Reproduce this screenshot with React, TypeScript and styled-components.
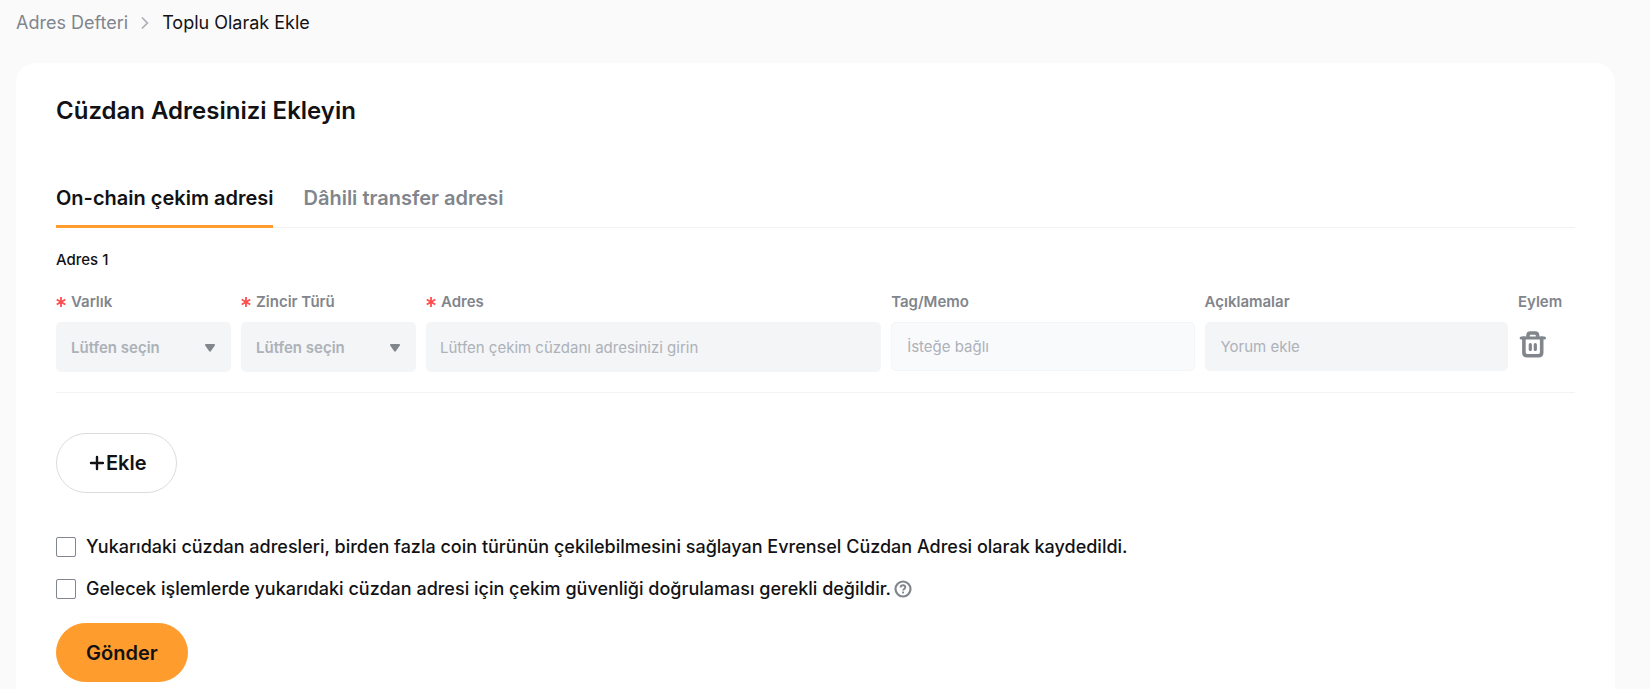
import React, { useState } from "react";
import styled, { createGlobalStyle } from "styled-components";

const color = {
  page: "#fafafa",
  ink: "#121214",
  muted: "#81858c",
  hint: "#adb1b8",
  field: "#f3f5f7",
  line: "#f3f3f4",
  accent: "#ff9c2e",
  danger: "#ff4d4f",
};

const GlobalStyle = createGlobalStyle`
  *, *::before, *::after { box-sizing: border-box; }
  html, body, #root { height: 100%; }
  body {
    margin: 0;
    background: ${color.page};
    color: ${color.ink};
    font-family: Inter, "Liberation Sans", sans-serif;
  }
  button, input, select { font-family: inherit; }
`;

const Page = styled.div`
  display: flex;
  flex-direction: column;
  min-height: 100%;
  padding: 0 35px 0 16px;
`;

const Breadcrumb = styled.nav`
  display: flex;
  align-items: center;
  gap: 11px;
  height: 46px;
  margin-bottom: 17px;
  font-size: 18px;
  line-height: 24px;
`;

const Crumb = styled.a<{ $current?: boolean }>`
  color: ${(p) => (p.$current ? color.ink : color.muted)};
  text-decoration: none;
`;

const Card = styled.main`
  flex: 1;
  padding: 32px 40px 7px;
  border-radius: 20px 20px 0 0;
  background: #fff;
`;

const Title = styled.h1`
  margin: 0;
  font-size: 24px;
  font-weight: 600;
  line-height: 32px;
`;

const TabList = styled.div`
  display: flex;
  gap: 30px;
  margin-top: 48px;
  box-shadow: inset 0 -1px ${color.line};
`;

const Tab = styled.button<{ $active?: boolean }>`
  height: 53px;
  padding: 0 0 5px;
  border: 0;
  border-bottom: 3px solid ${(p) => (p.$active ? color.accent : "transparent")};
  background: none;
  color: ${(p) => (p.$active ? color.ink : color.muted)};
  font-size: 20px;
  font-weight: 600;
  line-height: 24px;
  cursor: pointer;
`;

const Entry = styled.section`
  padding: 22px 0 20px;
  border-bottom: 1px solid ${color.line};
`;

const EntryTitle = styled.h2`
  margin: 0 0 22px;
  font-size: 15px;
  font-weight: 500;
  line-height: 20px;
`;

const Fields = styled.div`
  display: grid;
  grid-template-columns: 175px 175px minmax(0, 3fr) minmax(0, 2fr) minmax(0, 2fr) 57px;
  gap: 10px;
`;

const Field = styled.div`
  display: flex;
  flex-direction: column;
  gap: 10px;
`;

const FieldLabel = styled.label`
  display: flex;
  align-items: center;
  gap: 5px;
  color: ${color.muted};
  font-size: 15px;
  font-weight: 600;
  line-height: 20px;
`;

const SelectBox = styled.div`
  display: grid;
  align-items: center;

  > * { grid-area: 1 / 1; }
`;

const Select = styled.select`
  width: 100%;
  height: 50px;
  padding: 0 15px;
  border: 0;
  border-radius: 5px;
  appearance: none;
  background: ${color.field};
  color: ${color.hint};
  font-size: 15px;
  font-weight: 600;
`;

const Caret = styled.svg`
  justify-self: end;
  margin: 2px 16px 0 0;
  pointer-events: none;
`;

const TextInput = styled.input<{ $optional?: boolean; $compact?: boolean }>`
  width: 100%;
  height: ${(p) => (p.$compact ? 49 : 50)}px;
  padding: 0 ${(p) => (p.$compact ? 15 : 14)}px;
  border: ${(p) => (p.$compact ? 1 : 0)}px solid ${color.field};
  border-radius: 5px;
  background: ${(p) => (p.$optional ? "#f9fafc" : color.field)};
  color: ${color.ink};
  font-size: 15px;

  &::placeholder { color: ${color.hint}; opacity: 1; }
`;

const IconButton = styled.button`
  display: flex;
  align-self: flex-start;
  padding: 7px 0;
  border: 0;
  background: none;
  color: ${color.muted};
  cursor: pointer;
`;

const PillButton = styled.button<{ $primary?: boolean }>`
  display: flex;
  align-items: center;
  gap: 2px;
  height: ${(p) => (p.$primary ? 59 : 60)}px;
  padding: 0 29px;
  border: 1px solid ${(p) => (p.$primary ? color.accent : "#dcdcde")};
  border-radius: 30px;
  background: ${(p) => (p.$primary ? color.accent : "#fff")};
  color: ${color.ink};
  font-size: 20px;
  font-weight: 600;
  line-height: 24px;
  cursor: pointer;
`;

const Options = styled.div`
  display: flex;
  flex-direction: column;
  gap: 18px;
  margin: 42px 0 22px;
`;

const Option = styled.div`
  display: flex;
  align-items: center;
`;

const OptionLabel = styled.label`
  display: flex;
  align-items: center;
  gap: 10px;
  font-size: 18px;
  font-weight: 500;
  line-height: 24px;
`;

const Checkbox = styled.input`
  flex: none;
  width: 20px;
  height: 20px;
  margin: 0;
  border: 1px solid ${color.muted};
  border-radius: 2px;
  appearance: none;
  background: #fff;

  &:checked { border-color: ${color.accent}; background: ${color.accent}; }
`;

const HelpButton = styled.button`
  display: flex;
  margin-left: 3px;
  padding: 0;
  border: 0;
  background: none;
  color: ${color.muted};
  cursor: pointer;
`;

const Actions = styled.div`
  display: flex;
  margin-top: 40px;
`;

const ChevronIcon = () => (
  <svg width="12" height="14" viewBox="0 0 12 14" fill="none" stroke="#adb1b8" strokeWidth="1.8" aria-hidden="true">
    <path d="M3 1.5 8.3 7 3 12.5" />
  </svg>
);

const CaretIcon = () => (
  <Caret width="10" height="8" viewBox="0 0 10 8" aria-hidden="true">
    <path d="M.9 0h8.2c.8 0 1.2.9.7 1.5L5.8 7.2c-.4.6-1.2.6-1.6 0L.2 1.5C-.3.9.1 0 .9 0Z" fill={color.muted} />
  </Caret>
);

const AsteriskIcon = () => (
  <svg width="10" height="10" viewBox="0 0 10 10" stroke={color.danger} strokeWidth="1.8" aria-hidden="true">
    <path d="M5 0v10M.7 2.5l8.6 5M9.3 2.5l-8.6 5" />
  </svg>
);

const PlusIcon = () => (
  <svg width="18" height="18" viewBox="0 0 18 18" stroke="currentColor" strokeWidth="2.4" strokeLinecap="round" aria-hidden="true">
    <path d="M11 3v12M5 9h12" />
  </svg>
);

const TrashIcon = () => (
  <svg width="30" height="30" viewBox="0 0 30 30" fill="none" stroke="currentColor" strokeLinecap="round" strokeLinejoin="round" aria-hidden="true">
    <path d="M3.2 9h23.2" strokeWidth="3.2" />
    <path d="M10 8V6.6C10 4.900 11 4 12.600 4h4.400c1.600 0 2.600.9 2.600 2.600V8M5.900 9v14.500c0 2 1 3.200 3.200 3.200h11.400c2.200 0 3.200-1.200 3.200-3.200V9" strokeWidth="3.600" />
    <path d="M12.300 15.500v5M17.300 15.500v5" strokeWidth="3.200" />
  </svg>
);

const HelpIcon = () => (
  <svg width="18" height="18" viewBox="0 0 18 18" fill="none" stroke="currentColor" strokeWidth="2.2" aria-hidden="true">
    <circle cx="9" cy="9" r="7.5" />
    <path d="M6.6 7.4C6.6 5.9 7.7 5.3 9 5.3s2.3.8 2.3 2c0 1.600-2.200 1.600-2.200 3.200" strokeWidth="1.900" />
    <path d="M9.100 11.600v1.800" strokeWidth="1.900" />
  </svg>
);

const SelectField = ({ id, label }: { id: string; label: string }) => (
  <Field>
    <FieldLabel htmlFor={id}>
      <AsteriskIcon />
      {label}
    </FieldLabel>
    <SelectBox>
      <Select id={id} defaultValue="">
        <option value="">Lütfen seçin</option>
      </Select>
      <CaretIcon />
    </SelectBox>
  </Field>
);

export default function App() {
  const [tab, setTab] = useState(0);

  return (
    <>
      <GlobalStyle />
      <Page>
        <Breadcrumb>
          <Crumb href="#adres-defteri">Adres Defteri</Crumb>
          <ChevronIcon />
          <Crumb href="#toplu" $current aria-current="page">Toplu Olarak Ekle</Crumb>
        </Breadcrumb>
        <Card>
          <Title>Cüzdan Adresinizi Ekleyin</Title>
          <TabList role="tablist">
            {["On-chain çekim adresi", "Dâhili transfer adresi"].map((name, i) => (
              <Tab key={name} role="tab" aria-selected={tab === i} $active={tab === i} onClick={() => setTab(i)}>
                {name}
              </Tab>
            ))}
          </TabList>
          <Entry>
            <EntryTitle>Adres 1</EntryTitle>
            <Fields>
              <SelectField id="asset" label="Varlık" />
              <SelectField id="chain" label="Zincir Türü" />
              <Field>
                <FieldLabel htmlFor="address">
                  <AsteriskIcon />
                  Adres
                </FieldLabel>
                <TextInput id="address" placeholder="Lütfen çekim cüzdanı adresinizi girin" />
              </Field>
              <Field>
                <FieldLabel htmlFor="memo">Tag/Memo</FieldLabel>
                <TextInput id="memo" placeholder="İsteğe bağlı" $compact $optional />
              </Field>
              <Field>
                <FieldLabel htmlFor="note">Açıklamalar</FieldLabel>
                <TextInput id="note" placeholder="Yorum ekle" $compact />
              </Field>
              <Field>
                <FieldLabel as="span">Eylem</FieldLabel>
                <IconButton type="button" aria-label="Sil">
                  <TrashIcon />
                </IconButton>
              </Field>
            </Fields>
          </Entry>
          <Actions>
            <PillButton type="button">
              <PlusIcon />
              Ekle
            </PillButton>
          </Actions>
          <Options>
            <Option>
              <OptionLabel>
                <Checkbox type="checkbox" />
                Yukarıdaki cüzdan adresleri, birden fazla coin türünün çekilebilmesini sağlayan Evrensel Cüzdan Adresi olarak kaydedildi.
              </OptionLabel>
            </Option>
            <Option>
              <OptionLabel>
                <Checkbox type="checkbox" />
                Gelecek işlemlerde yukarıdaki cüzdan adresi için çekim güvenliği doğrulaması gerekli değildir.
              </OptionLabel>
              <HelpButton type="button" aria-label="Bilgi">
                <HelpIcon />
              </HelpButton>
            </Option>
          </Options>
          <PillButton type="submit" $primary>Gönder</PillButton>
        </Card>
      </Page>
    </>
  );
}
